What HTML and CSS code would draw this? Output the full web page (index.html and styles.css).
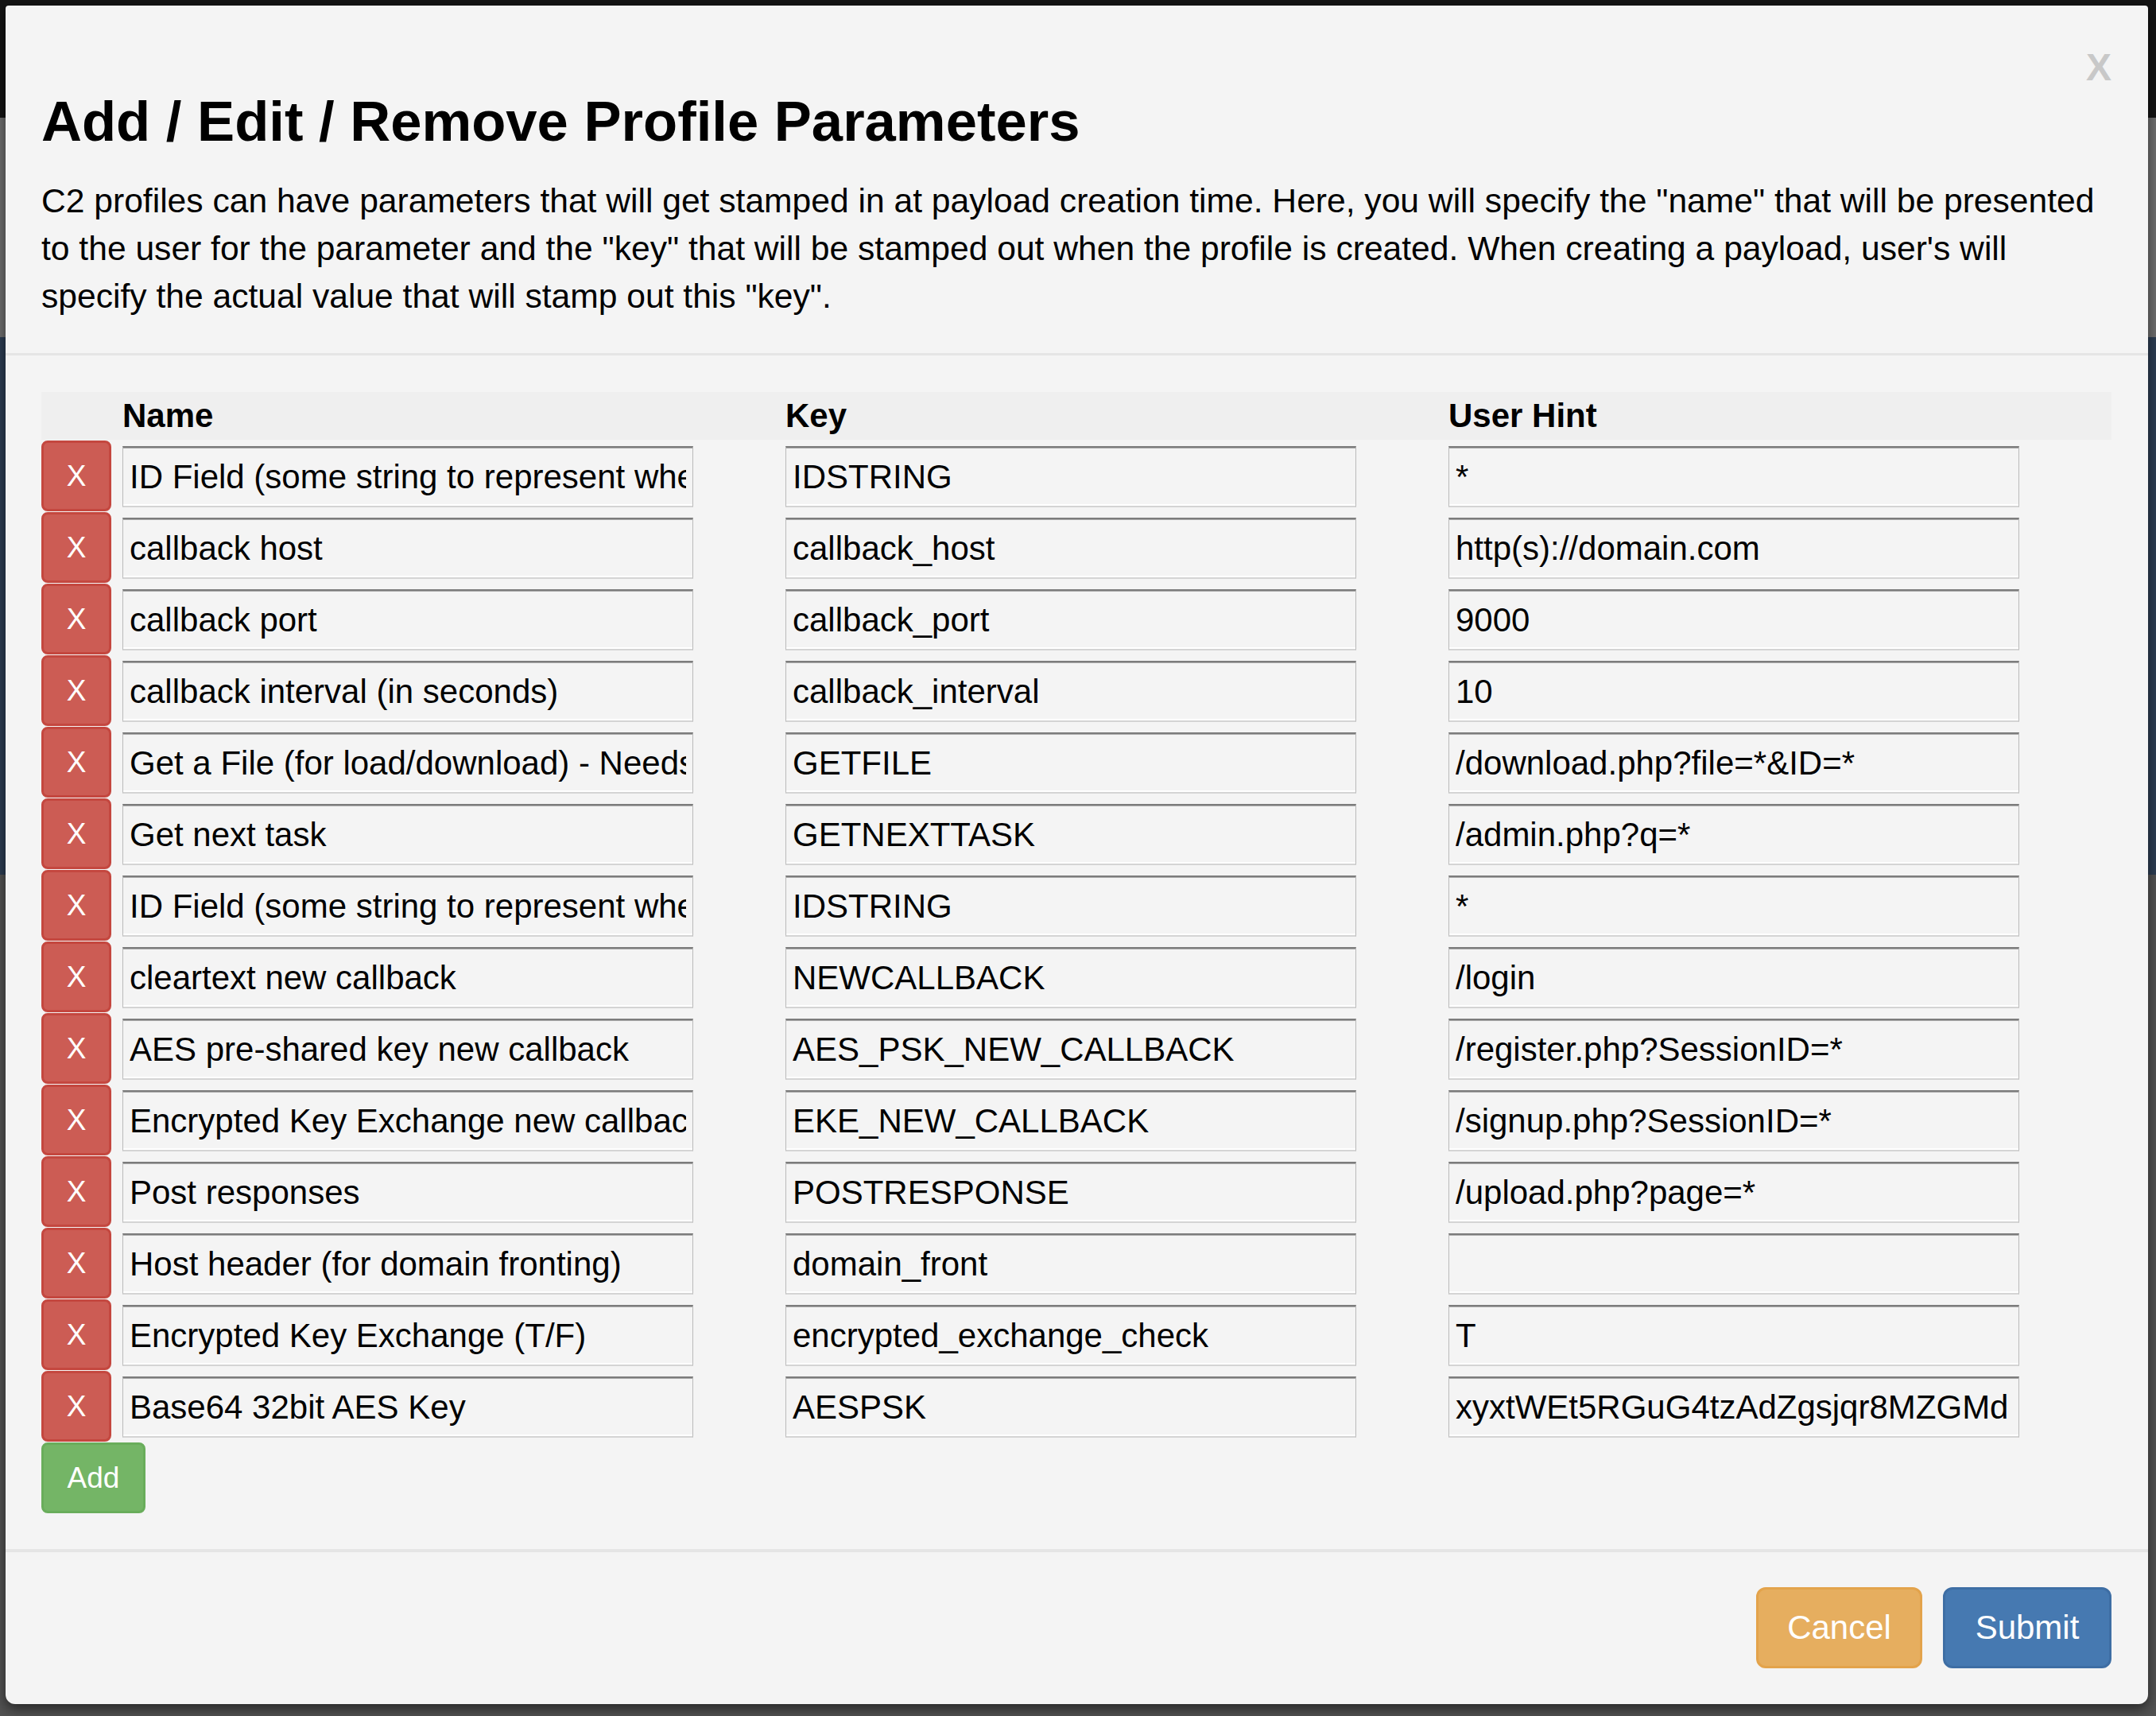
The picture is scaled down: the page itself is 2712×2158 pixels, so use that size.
FILE: index.html
```html
<!DOCTYPE html>
<html lang="en">
<head>
<meta charset="utf-8">
<title>Add / Edit / Remove Profile Parameters</title>
<link rel="stylesheet" href="styles.css">
</head>
<body>
<div class="modal">
  <div class="modal-header">
    <div class="close-row"><span class="close">X</span></div>
    <h2 class="title">Add / Edit / Remove Profile Parameters</h2>
    <p class="intro">C2 profiles can have parameters that will get stamped in at payload creation time. Here, you will specify the "name" that will be presented to the user for the parameter and the "key" that will be stamped out when the profile is created. When creating a payload, user's will specify the actual value that will stamp out this "key".</p>
  </div>
  <div class="modal-body">
    <div class="params">
      <div class="params-head"><span></span><span>Name</span><span>Key</span><span>User Hint</span></div>
      <div class="param-row"><button class="btn btn-remove">X</button><input class="field" type="text" value="ID Field (some string to represent where the ID is)"><input class="field" type="text" value="IDSTRING"><input class="field" type="text" value="*"></div>
      <div class="param-row"><button class="btn btn-remove">X</button><input class="field" type="text" value="callback host"><input class="field" type="text" value="callback_host"><input class="field" type="text" value="http(s)://domain.com"></div>
      <div class="param-row"><button class="btn btn-remove">X</button><input class="field" type="text" value="callback port"><input class="field" type="text" value="callback_port"><input class="field" type="text" value="9000"></div>
      <div class="param-row"><button class="btn btn-remove">X</button><input class="field" type="text" value="callback interval (in seconds)"><input class="field" type="text" value="callback_interval"><input class="field" type="text" value="10"></div>
      <div class="param-row"><button class="btn btn-remove">X</button><input class="field" type="text" value="Get a File (for load/download) - Needs to be a full URL"><input class="field" type="text" value="GETFILE"><input class="field" type="text" value="/download.php?file=*&amp;ID=*"></div>
      <div class="param-row"><button class="btn btn-remove">X</button><input class="field" type="text" value="Get next task"><input class="field" type="text" value="GETNEXTTASK"><input class="field" type="text" value="/admin.php?q=*"></div>
      <div class="param-row"><button class="btn btn-remove">X</button><input class="field" type="text" value="ID Field (some string to represent where the ID is)"><input class="field" type="text" value="IDSTRING"><input class="field" type="text" value="*"></div>
      <div class="param-row"><button class="btn btn-remove">X</button><input class="field" type="text" value="cleartext new callback"><input class="field" type="text" value="NEWCALLBACK"><input class="field" type="text" value="/login"></div>
      <div class="param-row"><button class="btn btn-remove">X</button><input class="field" type="text" value="AES pre-shared key new callback"><input class="field" type="text" value="AES_PSK_NEW_CALLBACK"><input class="field" type="text" value="/register.php?SessionID=*"></div>
      <div class="param-row"><button class="btn btn-remove">X</button><input class="field" type="text" value="Encrypted Key Exchange new callback"><input class="field" type="text" value="EKE_NEW_CALLBACK"><input class="field" type="text" value="/signup.php?SessionID=*"></div>
      <div class="param-row"><button class="btn btn-remove">X</button><input class="field" type="text" value="Post responses"><input class="field" type="text" value="POSTRESPONSE"><input class="field" type="text" value="/upload.php?page=*"></div>
      <div class="param-row"><button class="btn btn-remove">X</button><input class="field" type="text" value="Host header (for domain fronting)"><input class="field" type="text" value="domain_front"><input class="field" type="text" value=""></div>
      <div class="param-row"><button class="btn btn-remove">X</button><input class="field" type="text" value="Encrypted Key Exchange (T/F)"><input class="field" type="text" value="encrypted_exchange_check"><input class="field" type="text" value="T"></div>
      <div class="param-row"><button class="btn btn-remove">X</button><input class="field" type="text" value="Base64 32bit AES Key"><input class="field" type="text" value="AESPSK"><input class="field" type="text" value="xyxtWEt5RGuG4tzAdZgsjqr8MZGMd"></div>
    </div>
    <button class="btn btn-add">Add</button>
  </div>
  <div class="modal-footer">
    <button class="btn btn-lg btn-cancel">Cancel</button>
    <button class="btn btn-lg btn-submit">Submit</button>
  </div>
</div>
</body>
</html>
```

FILE: styles.css
```css
* {
  box-sizing: border-box;
}

html,
body {
  margin: 0;
}

body {
  min-height: 2158px;
  padding: 7px 10px 15px 7px;
  font-family: "Liberation Sans", Arial, Helvetica, sans-serif;
  background:
    linear-gradient(#141414 0 148px, #6e6e6e 148px 424px, #2c3d52 424px 1100px, #525252 1100px);
}

.modal {
  width: 2695px;
  background: #f4f4f4;
  border-radius: 4px 4px 12px 12px;
  box-shadow: 0 6px 16px rgba(0, 0, 0, 0.55);
  color: #000;
}

.modal-header {
  padding: 54px 46px 42px 45px;
  border-bottom: 3px solid #e5e5e5;
}

.close-row {
  display: flex;
  justify-content: flex-end;
  height: 48px;
}

.close {
  font-size: 48px;
  font-weight: 700;
  line-height: 48px;
  color: #c8c8c8;
}

.title {
  margin: 5px 0 0;
  font-size: 70.6px;
  line-height: 78px;
  font-weight: 700;
}

.intro {
  margin: 30px 0 0;
  font-size: 42.6px;
  line-height: 60px;
}

.modal-body {
  padding: 46px 46px 45px 45px;
}

.params-head,
.param-row {
  display: grid;
  grid-template-columns: 102px repeat(3, 834px);
}

.params-head {
  height: 60px;
  margin-bottom: 1px;
  background: #efefef;
  font-size: 42px;
  font-weight: 700;
  line-height: 60px;
}

.param-row {
  height: 90px;
  align-items: start;
}

.btn {
  display: flex;
  align-items: center;
  justify-content: center;
  margin: 0;
  padding: 0;
  border: 3px solid transparent;
  color: #fff;
  font-family: inherit;
  cursor: pointer;
}

.btn-remove {
  width: 88px;
  height: 89px;
  border-radius: 8px;
  background: #cc5c54;
  border-color: #c4473f;
  font-size: 37px;
}

.btn-add {
  width: 131px;
  height: 89px;
  border-radius: 8px;
  background: #74b566;
  border-color: #69ad5b;
  font-size: 37px;
}

.field {
  width: 718px;
  height: 77px;
  margin: 7px 0 0;
  padding: 0 8px;
  background: #f4f4f4;
  border: 1px solid #bababa;
  border-top: 2px solid #7c7c7c;
  border-bottom: 2px solid #d4d4d4;
  box-shadow: inset 0 1px 0 #a9a9a9, inset 0 -2px 0 #ffffff;
  border-radius: 0;
  font-family: "Liberation Sans", Arial, Helvetica, sans-serif;
  font-size: 42px;
  color: #000;
  outline: none;
}

.modal-footer {
  display: flex;
  justify-content: flex-end;
  gap: 26px;
  padding: 44px 46px 45px 45px;
  border-top: 4px solid #e5e5e5;
}

.btn-lg {
  height: 102px;
  border-radius: 12px;
  font-size: 42px;
}

.btn-cancel {
  width: 209px;
  background: #e6ae5f;
  border-color: #e3a34b;
}

.btn-submit {
  width: 212px;
  background: #4679b1;
  border-color: #3e6ea4;
}
```
